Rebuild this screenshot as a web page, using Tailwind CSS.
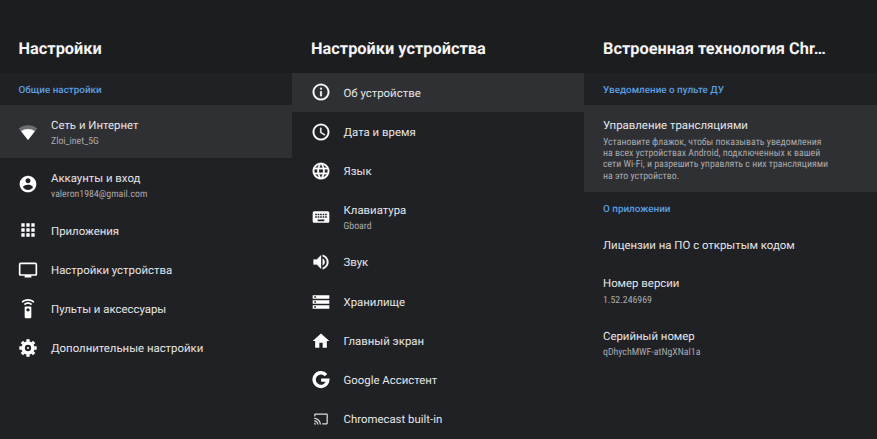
<!DOCTYPE html>
<html lang="ru">
<head>
<meta charset="utf-8">
<title>Настройки</title>
<script src="https://cdn.jsdelivr.net/npm/@tailwindcss/browser@4"></script>
</head>
<body class="w-[877px] h-[439px] overflow-hidden bg-[#202124] font-['Roboto',sans-serif] text-[11.4px] leading-[18px] text-[#e4e5e7] [text-rendering:geometricPrecision]">
<main class="grid grid-cols-[292px_292px_293px] h-[439px] whitespace-nowrap">

<section class="flex flex-col">
  <header class="h-[72.5px] shrink-0 bg-[#1c1d1f] pl-[18.5px] pt-[36.5px] text-[16.35px] leading-[24px] font-bold text-[#f3f3f4]">Настройки</header>
  <h2 class="h-[32.5px] shrink-0 pl-[18.5px] pt-[11px] text-[9.9px] leading-[14px] font-medium text-[#5a9fe2]">Общие настройки</h2>
  <div class="flex h-[53px] shrink-0 items-center gap-[13px] pl-[18px] bg-[#2f3034]">
    <svg class="size-5 shrink-0" viewBox="0 0 24 24" fill="#fff"><path d="M12 21.500 23 7.800C19.800 5.300 16 4 12 4S4.200 5.300 1 7.800z" fill-opacity=".3"/><path d="M12 21.500 20.300 11.100C18 9.400 15 8.400 12 8.400s-6 1-8.300 2.700z"/></svg>
    <div class="pt-px"><p>Сеть и Интернет</p><p class="mt-[2px] text-[9.85px] leading-[12px] [font-family:'Roboto_Condensed',Roboto,sans-serif] [font-stretch:75%] text-[#a9aaad]">Zloi_inet_5G</p></div>
  </div>
  <div class="flex h-[52.8px] shrink-0 items-center gap-[13px] pl-[18px]">
    <svg class="size-5 shrink-0" viewBox="0 0 24 24" fill="#fff"><path d="M12 2C6.480 2 2 6.480 2 12s4.480 10 10 10 10-4.480 10-10S17.520 2 12 2zm0 3c1.660 0 3 1.340 3 3s-1.340 3-3 3-3-1.340-3-3 1.340-3 3-3zm0 14.200c-2.500 0-4.710-1.280-6-3.220.03-1.990 4-3.080 6-3.080 1.990 0 5.970 1.090 6 3.080-1.290 1.940-3.500 3.220-6 3.220z"/></svg>
    <div class="pt-px"><p>Аккаунты и вход</p><p class="mt-[2px] text-[9.85px] leading-[12px] [font-family:'Roboto_Condensed',Roboto,sans-serif] [font-stretch:75%] text-[#a9aaad]">valeron1984@gmail.com</p></div>
  </div>
  <div class="flex h-[39.2px] shrink-0 items-center gap-[13px] pl-[18px]">
    <svg class="size-5 shrink-0" viewBox="0 0 24 24" fill="#fff"><path d="M4 8h4V4H4v4zm6 12h4v-4h-4v4zm-6 0h4v-4H4v4zm0-6h4v-4H4v4zm6 0h4v-4h-4v4zm6-10v4h4V4h-4zm-6 4h4V4h-4v4zm6 6h4v-4h-4v4zm0 6h4v-4h-4v4z"/></svg>
    <p class="pt-px">Приложения</p>
  </div>
  <div class="flex h-[39.2px] shrink-0 items-center gap-[13px] pl-[18px]">
    <svg class="size-5 shrink-0" viewBox="0 0 24 24" fill="#fff"><path d="M21 3H3c-1.100 0-2 .9-2 2v12c0 1.100.9 2 2 2h5v2h8v-2h5c1.100 0 2-.9 2-2V5c0-1.100-.9-2-2-2zm0 14H3V5h18v12z"/></svg>
    <p>Настройки устройства</p>
  </div>
  <div class="flex h-[39.2px] shrink-0 items-center gap-[13px] pl-[18px]">
    <svg class="size-5 shrink-0" viewBox="0 0 24 24" fill="#fff"><path d="M15 9H9c-.55 0-1 .45-1 1v12c0 .55.45 1 1 1h6c.55 0 1-.45 1-1V10c0-.55-.45-1-1-1zm-3 6c-1.100 0-2-.9-2-2s.9-2 2-2 2 .9 2 2-.9 2-2 2zM7.050 6.050l1.410 1.410C9.370 6.560 10.620 6 12 6s2.630.56 3.540 1.460l1.410-1.410C15.680 4.780 13.930 4 12 4s-3.680.78-4.950 2.050zM12 0C8.960 0 6.210 1.230 4.220 3.220l1.410 1.410C7.260 3.010 9.510 2 12 2s4.740 1.010 6.360 2.640l1.410-1.410C17.790 1.230 15.040 0 12 0z"/></svg>
    <p>Пульты и аксессуары</p>
  </div>
  <div class="flex h-[39.2px] shrink-0 items-center gap-[13px] pl-[18px]">
    <svg class="size-5 shrink-0" viewBox="0 0 24 24" fill="none" stroke="#fff"><circle cx="12" cy="12" r="5.900" stroke-width="4.200"/><path d="M12 1.600v3M12 19.400v3M1.600 12h3M19.400 12h3M4.650 4.650l2.100 2.100M17.250 17.250l2.100 2.100M4.650 19.350l2.100-2.100M17.250 6.750l2.100-2.100" stroke-width="4"/><circle cx="12" cy="12" r="1.200" fill="#fff" stroke="none"/></svg>
    <p>Дополнительные настройки</p>
  </div>
</section>

<section class="flex flex-col">
  <header class="h-[72.5px] shrink-0 bg-[#1c1d1f] pl-[19px] pt-[36.5px] text-[16.35px] leading-[24px] font-bold text-[#f3f3f4]">Настройки устройства</header>
  <div class="flex h-[39.5px] shrink-0 items-center gap-[13px] pl-[18.5px] bg-[#2f3034]">
    <svg class="size-5 shrink-0" viewBox="0 0 24 24" fill="#fff"><path d="M11 17h2v-6h-2v6zm1-15C6.480 2 2 6.480 2 12s4.480 10 10 10 10-4.480 10-10S17.520 2 12 2zm0 18c-4.410 0-8-3.590-8-8s3.590-8 8-8 8 3.590 8 8-3.590 8-8 8zM11 9h2V7h-2v2z" stroke="#fff" stroke-width=".3"/></svg>
    <p class="pt-px">Об устройстве</p>
  </div>
  <div class="flex h-[39.2px] shrink-0 items-center gap-[13px] pl-[18.5px]">
    <svg class="size-5 shrink-0" viewBox="0 0 24 24" fill="#fff"><path d="M11.990 2C6.470 2 2 6.480 2 12s4.470 10 9.990 10C17.520 22 22 17.520 22 12S17.520 2 11.990 2zM12 20c-4.420 0-8-3.580-8-8s3.580-8 8-8 8 3.580 8 8-3.580 8-8 8zm.5-13H11v6l5.250 3.150.75-1.230-4.500-2.670z" stroke="#fff" stroke-width=".3"/></svg>
    <p>Дата и время</p>
  </div>
  <div class="flex h-[39.2px] shrink-0 items-center gap-[13px] pl-[18.5px]">
    <svg class="size-5 shrink-0" viewBox="0 0 24 24" fill="#fff"><path d="M11.990 2C6.470 2 2 6.480 2 12s4.470 10 9.990 10C17.520 22 22 17.520 22 12S17.520 2 11.990 2zm6.930 6h-2.950c-.32-1.250-.78-2.450-1.380-3.560 1.840.63 3.370 1.910 4.330 3.560zM12 4.040c.83 1.200 1.480 2.530 1.910 3.960h-3.820c.43-1.430 1.080-2.760 1.910-3.960zM4.260 14C4.100 13.360 4 12.690 4 12s.1-1.360.26-2h3.380c-.08.66-.14 1.320-.14 2s.06 1.340.14 2H4.260zm.82 2h2.950c.32 1.250.78 2.450 1.380 3.560-1.840-.63-3.370-1.900-4.330-3.560zm2.950-8H5.080c.96-1.660 2.490-2.930 4.330-3.560C8.810 5.550 8.350 6.750 8.030 8zM12 19.960c-.83-1.200-1.480-2.530-1.910-3.960h3.820c-.43 1.430-1.080 2.760-1.910 3.960zM14.340 14H9.660c-.09-.66-.16-1.320-.16-2s.07-1.350.16-2h4.680c.09.65.16 1.320.16 2s-.07 1.340-.16 2zm.25 5.560c.6-1.110 1.060-2.310 1.380-3.560h2.950c-.96 1.650-2.490 2.930-4.330 3.560zM16.360 14c.08-.66.14-1.320.14-2s-.06-1.340-.14-2h3.380c.16.64.26 1.310.26 2s-.1 1.360-.26 2h-3.380z" stroke="#fff" stroke-width=".3"/></svg>
    <p>Язык</p>
  </div>
  <div class="flex h-[52.4px] shrink-0 items-center gap-[13px] pl-[18.5px]">
    <svg class="size-5 shrink-0" viewBox="0 0 24 24" fill="#fff"><path d="M20 5H4c-1.100 0-1.990.9-1.990 2L2 17c0 1.100.9 2 2 2h16c1.100 0 2-.9 2-2V7c0-1.100-.9-2-2-2zm-9 3h2v2h-2V8zm0 3h2v2h-2v-2zM8 8h2v2H8V8zm0 3h2v2H8v-2zm-1 2H5v-2h2v2zm0-3H5V8h2v2zm9 7H8v-2h8v2zm0-4h-2v-2h2v2zm0-3h-2V8h2v2zm3 3h-2v-2h2v2zm0-3h-2V8h2v2z"/></svg>
    <div><p>Клавиатура</p><p class="mt-[2px] text-[9.85px] leading-[12px] [font-family:'Roboto_Condensed',Roboto,sans-serif] [font-stretch:75%] text-[#a9aaad]">Gboard</p></div>
  </div>
  <div class="flex h-[39.2px] shrink-0 items-center gap-[13px] pl-[18.5px]">
    <svg class="size-5 shrink-0" viewBox="0 0 24 24" fill="#fff"><path d="M3 9v6h4l5 5V4L7 9H3zm13.500 3c0-1.770-1.020-3.290-2.500-4.030v8.050c1.480-.73 2.500-2.250 2.500-4.020zM14 3.230v2.060c2.890.86 5 3.540 5 6.710s-2.110 5.850-5 6.710v2.060c4.010-.91 7-4.490 7-8.770s-2.990-7.860-7-8.770z" stroke="#fff" stroke-width=".3"/></svg>
    <p>Звук</p>
  </div>
  <div class="flex h-[39.2px] shrink-0 items-center gap-[13px] pl-[18.5px]">
    <svg class="size-5 shrink-0" viewBox="0 0 24 24" fill="#fff"><path d="M2 20h20v-4H2v4zm2-3h2v2H4v-2zM2 4v4h20V4H2zm4 3H4V5h2v2zm-4 7h20v-4H2v4zm2-3h2v2H4v-2z"/></svg>
    <p>Хранилище</p>
  </div>
  <div class="flex h-[39.2px] shrink-0 items-center gap-[13px] pl-[18.5px]">
    <svg class="size-5 shrink-0" viewBox="0 0 24 24" fill="#fff"><path d="M10 20v-6h4v6h5v-8h3L12 3 2 12h3v8z"/></svg>
    <p>Главный экран</p>
  </div>
  <div class="flex h-[39.2px] shrink-0 items-center gap-[13px] pl-[18.5px]">
    <svg class="size-5 shrink-0" viewBox="0 0 24 24" fill="none" stroke="#fff" stroke-width="4"><path d="M18.100 6.100A8.200 8.200 0 1 0 20.100 12.200H12.200"/></svg>
    <p>Google Ассистент</p>
  </div>
  <div class="flex h-[39.2px] shrink-0 items-center gap-[13px] pl-[18.5px]">
    <svg class="size-5 shrink-0 p-[2.6px]" viewBox="0 0 24 24" fill="#dcdcdc"><path d="M21 3H3c-1.100 0-2 .9-2 2v3h2V5h18v14h-7v2h7c1.100 0 2-.9 2-2V5c0-1.100-.9-2-2-2zM1 18v3h3c0-1.660-1.340-3-3-3zm0-4v2c2.760 0 5 2.240 5 5h2c0-3.870-3.130-7-7-7zm0-4v2c4.970 0 9 4.030 9 9h2c0-6.080-4.930-11-11-11z"/></svg>
    <p>Chromecast built-in</p>
  </div>
</section>

<section class="flex flex-col">
  <header class="h-[72.5px] shrink-0 bg-[#1c1d1f] pl-[19px] pt-[36.5px] text-[16.35px] leading-[24px] font-bold text-[#f3f3f4]">Встроенная технология Chr…</header>
  <h2 class="h-[32.5px] shrink-0 pl-[19px] pt-[11px] text-[9.9px] leading-[14px] font-medium text-[#5a9fe2]">Уведомление о пульте ДУ</h2>
  <div class="h-[87px] shrink-0 pl-[19px] pt-[11px] bg-[#2f3034]">
    <p>Управление трансляциями</p>
    <p class="mt-[2.5px] text-[9.85px] leading-[11.4px] [font-family:'Roboto_Condensed',Roboto,sans-serif] [font-stretch:75%] text-[#a9aaad]">Установите флажок, чтобы показывать уведомления<br>на всех устройствах Android, подключенных к вашей<br>сети Wi-Fi, и разрешить управлять с них трансляциями<br>на это устройство.</p>
  </div>
  <h2 class="h-[33px] shrink-0 pl-[19px] pt-[10.5px] text-[9.9px] leading-[14px] font-medium text-[#5a9fe2]">О приложении</h2>
  <div class="flex h-[39.2px] shrink-0 items-center pl-[19px]"><p>Лицензии на ПО с открытым кодом</p></div>
  <div class="flex h-[52.4px] shrink-0 items-center pl-[19px]">
    <div><p>Номер версии</p><p class="mt-[3px] text-[9.85px] leading-[12px] [font-family:'Roboto_Condensed',Roboto,sans-serif] [font-stretch:75%] text-[#a9aaad]">1.52.246969</p></div>
  </div>
  <div class="flex h-[52.4px] shrink-0 items-center pl-[19px]">
    <div><p>Серийный номер</p><p class="mt-[2.5px] text-[9.85px] leading-[12px] [font-family:'Roboto_Condensed',Roboto,sans-serif] [font-stretch:75%] text-[#a9aaad]">qDhychMWF-atNgXNal1a</p></div>
  </div>
</section>

</main>
</body>
</html>
